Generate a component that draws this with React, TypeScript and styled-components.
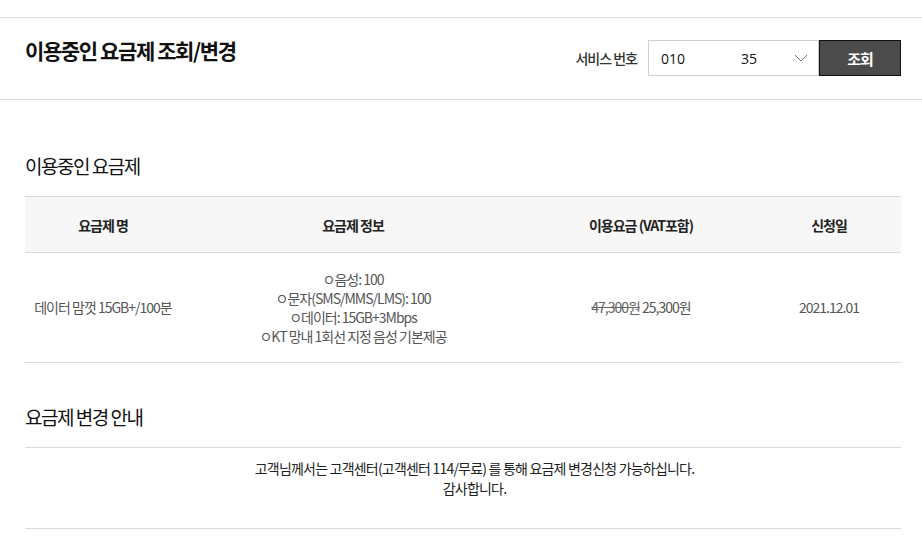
import React from "react";
import styled, { createGlobalStyle } from "styled-components";

const GlobalStyle = createGlobalStyle`
  html, body { margin: 0; padding: 0; background: #fff; }
  body {
    font-family: "Noto Sans CJK KR", "Noto Sans", sans-serif;
    color: #222;
  }
  * { box-sizing: border-box; }
`;

const Page = styled.div`
  width: 922px;
  padding-top: 17px;
`;

const Header = styled.header`
  display: flex;
  justify-content: space-between;
  align-items: flex-start;
  height: 83px;
  padding: 20px 21px 0 25px;
  border-top: 1px solid #dcdcdc;
  border-bottom: 1px solid #dcdcdc;
`;

const PageTitle = styled.h1`
  margin: 0;
  font-size: 21px;
  line-height: 24px;
  font-weight: 700;
  letter-spacing: -1.4px;
  color: #111;
`;

const Controls = styled.div`
  display: flex;
  align-items: center;
  margin-top: 2px;
`;

const Label = styled.span`
  font-size: 14px;
  font-weight: 500;
  color: #333;
  letter-spacing: -1px;
  margin-right: 11px;
`;

const Select = styled.div`
  display: flex;
  align-items: center;
  width: 171px;
  height: 36px;
  border: 1px solid #cfcfcf;
  padding: 0 10px 0 12px;
  font-family: "Open Sans", "Liberation Sans", sans-serif;
  font-size: 14px;
  color: #111;
`;

const SelectPart = styled.span<{ $w: number }>`
  width: ${(p) => p.$w}px;
`;

const Chevron = styled.svg`
  margin-left: auto;
`;

const Button = styled.button`
  width: 82px;
  height: 36px;
  background: #4b4b4b;
  border: 1px solid #111;
  color: #fff;
  font-family: "Noto Sans CJK KR", sans-serif;
  font-size: 15px;
  font-weight: 700;
  letter-spacing: -1px;
  padding: 0;
`;

const Main = styled.main`
  padding: 0 21px 0 25px;
`;

const SectionTitle = styled.h2<{ $top: number }>`
  margin: ${(p) => p.$top}px 0 17px;
  font-size: 19px;
  line-height: 26px;
  font-weight: 400;
  letter-spacing: -1.5px;
  color: #111;
`;

const Table = styled.table`
  width: 100%;
  border-collapse: collapse;
  table-layout: fixed;
  border-top: 1px solid #d9d9d9;
`;

const Th = styled.th<{ $w: number }>`
  width: ${(p) => p.$w}px;
  height: 56px;
  background: #f7f7f7;
  border-bottom: 1px solid #d9d9d9;
  font-size: 14px;
  font-weight: 700;
  color: #222;
  letter-spacing: -1px;
  text-align: center;
  padding: 0;
`;

const Td = styled.td`
  height: 110px;
  border-bottom: 1px solid #d9d9d9;
  font-size: 14px;
  line-height: 19px;
  color: #555;
  letter-spacing: -1px;
  text-align: center;
  padding: 0;
`;

const Struck = styled.s`
  color: #666;
`;

const Notice = styled.div`
  border-top: 1px solid #d9d9d9;
  border-bottom: 1px solid #d9d9d9;
  padding: 10px 0 30px 23px;
  text-align: center;
  font-size: 14px;
  line-height: 20px;
  letter-spacing: -0.8px;
  color: #222;
`;

const info = [
  "ㅇ음성: 100",
  "ㅇ문자(SMS/MMS/LMS): 100",
  "ㅇ데이터: 15GB+3Mbps",
  "ㅇKT 망내 1회선 지정 음성 기본제공",
];

export default function App() {
  return (
    <Page>
      <GlobalStyle />
      <Header>
        <PageTitle>이용중인 요금제 조회/변경</PageTitle>
        <Controls>
          <Label>서비스 번호</Label>
          <Select>
            <SelectPart $w={80}>010</SelectPart>
            <SelectPart $w={30}>35</SelectPart>
            <Chevron width="14" height="8" viewBox="0 0 14 8">
              <path d="M1 1 L7 7 L13 1" fill="none" stroke="#777" strokeWidth="1" />
            </Chevron>
          </Select>
          <Button>조회</Button>
        </Controls>
      </Header>
      <Main>
        <SectionTitle $top={53}>이용중인 요금제</SectionTitle>
        <Table>
          <thead>
            <tr>
              <Th $w={156}>요금제 명</Th>
              <Th $w={344}>요금제 정보</Th>
              <Th $w={232}>이용요금 (VAT포함)</Th>
              <Th $w={144}>신청일</Th>
            </tr>
          </thead>
          <tbody>
            <tr>
              <Td>데이터 맘껏 15GB+/100분</Td>
              <Td>
                {info.map((l) => (
                  <div key={l}>{l}</div>
                ))}
              </Td>
              <Td>
                <Struck>47,300원</Struck> 25,300원
              </Td>
              <Td>2021.12.01</Td>
            </tr>
          </tbody>
        </Table>
        <SectionTitle $top={41}>요금제 변경 안내</SectionTitle>
        <Notice>
          고객님께서는 고객센터(고객센터 114/무료) 를 통해 요금제 변경신청 가능하십니다.
          <br />
          감사합니다.
        </Notice>
      </Main>
    </Page>
  );
}
